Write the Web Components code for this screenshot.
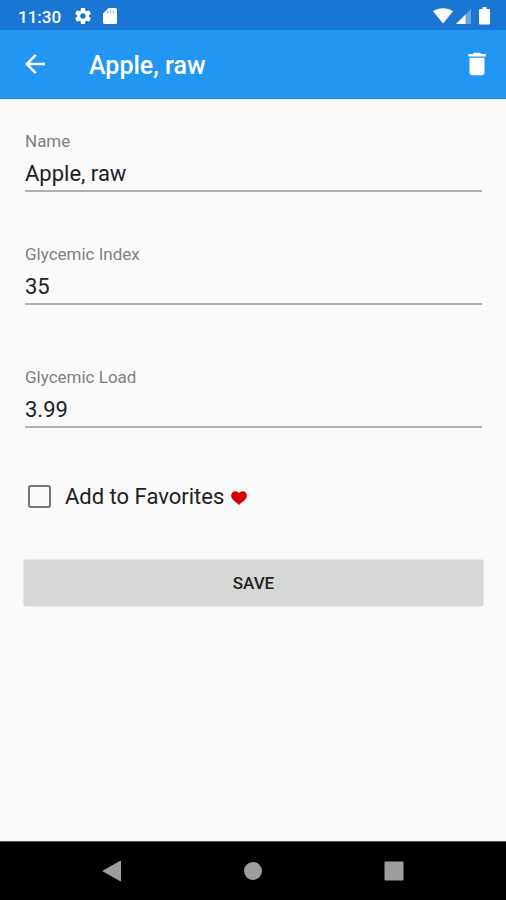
<!DOCTYPE html>
<html lang="en">
<head>
<meta charset="utf-8">
<meta name="viewport" content="width=device-width, initial-scale=1">
<title>Apple, raw</title>
<style>
  html, body { height: 100%; margin: 0; }
  body { font-family: Roboto, "Liberation Sans", sans-serif; background: #fafafa; color: #212121; }
</style>
</head>
<body>
<food-editor></food-editor>
<script>
class BaseElement extends HTMLElement {
  constructor() {
    super();
    this.attachShadow({ mode: "open" });
  }
  connectedCallback() {
    this.shadowRoot.innerHTML = `<style>*{box-sizing:border-box}${this.css()}</style>${this.html()}`;
  }
}

customElements.define("status-bar", class extends BaseElement {
  css() {
    return `
    :host { display: flex; align-items: center; height: 30px; padding: 1px 16px 0 18px; box-sizing: border-box;
      background: #1976d2; color: #fff; font-size: 17px; font-weight: 500; line-height: 24px; }
    svg { display: block; fill: currentColor; }
    .left, .right { display: flex; align-items: center; }
    .left { gap: 12px; }
    .right { margin-left: auto; gap: 3px; }
    time { margin: 2px 2px 0 0; }`;
  }
  html() {
    return `
    <div class="left">
      <time>11:30</time>
      <svg width="16" height="16" viewBox="2 2 20 20"><path d="M19.43 12.98c.04-.32.07-.64.07-.98s-.03-.66-.07-.98l2.11-1.65c.19-.15.24-.42.12-.64l-2-3.46c-.12-.22-.39-.3-.61-.22l-2.49 1c-.52-.4-1.08-.73-1.69-.98l-.38-2.65C14.46 2.18 14.25 2 14 2h-4c-.25 0-.46.18-.49.42l-.38 2.65c-.61.25-1.17.59-1.69.98l-2.49-1c-.23-.09-.49 0-.61.22l-2 3.46c-.13.22-.07.49.12.64l2.11 1.65c-.04.32-.07.65-.07.98s.03.66.07.98l-2.11 1.65c-.19.15-.24.42-.12.64l2 3.46c.12.22.39.3.61.22l2.49-1c.52.4 1.08.73 1.69.98l.38 2.65c.03.24.24.42.49.42h4c.25 0 .46-.18.49-.42l.38-2.65c.61-.25 1.17-.59 1.69-.98l2.49 1c.23.09.49 0 .61-.22l2-3.46c.12-.22.07-.49-.12-.64l-2.11-1.65zM12 15.5c-1.93 0-3.5-1.57-3.5-3.5s1.57-3.5 3.5-3.5 3.5 1.57 3.5 3.5-1.57 3.5-3.5 3.5z"/></svg>
      <svg width="14" height="16" viewBox="0 0 14 16"><path d="M5.500 0H12.500a1.500 1.500 0 0 1 1.500 1.500V14.500a1.500 1.500 0 0 1-1.500 1.500H1.500A1.500 1.500 0 0 1 0 14.500V5.500z"/><path d="M5 2.500v3M7.700 2.500v3M10.400 2.500v3" stroke="#1976d2" stroke-width="1" opacity=".55"/></svg>
    </div>
    <div class="right">
      <svg width="20" height="16" viewBox="0 0 20 16"><path d="M0 3.200C5.500-.7 14.500-.7 20 3.200L10 15.500z"/></svg>
      <svg width="15" height="16" viewBox="0 0 15 16"><path d="M15 1v15H0z" opacity=".35"/><path d="M9.500 6.500V16H0z"/></svg>
      <svg width="16" height="18" viewBox="-5 0 16 18"><path d="M3.500 0h4v2H10a1 1 0 0 1 1 1v13.500a1 1 0 0 1-1 1H1a1 1 0 0 1-1-1V3a1 1 0 0 1 1-1h2.500z"/></svg>
    </div>`;
  }
});

customElements.define("app-bar", class extends BaseElement {
  css() {
    return `
    :host { display: flex; align-items: center; height: 69px; padding: 0 14px 0 20px; box-sizing: border-box;
      background: #2196f3; color: #fff; border-bottom: 1px solid #1e88dd; }
    h1 { flex: 1; margin: 0 0 0 39px; padding-top: 4px; font-size: 25px; font-weight: 500; line-height: 32px; }
    button { border: 0; padding: 0; background: none; color: inherit; display: block; }
    svg { display: block; fill: currentColor; }`;
  }
  html() {
    return `
    <button type="button" aria-label="Back"><svg width="30" height="30" viewBox="0 0 24 24"><path d="M20 11H7.830l5.590-5.590L12 4l-8 8 8 8 1.410-1.410L7.830 13H20v-2z"/></svg></button>
    <h1><slot></slot></h1>
    <button type="button" aria-label="Delete"><svg width="30" height="30" viewBox="0 0 24 24"><path d="M6 19c0 1.100.9 2 2 2h8c1.100 0 2-.9 2-2V7H6v12zM19 4h-3.500l-1-1h-5l-1 1H5v2h14V4z"/></svg></button>`;
  }
});

customElements.define("text-field", class extends BaseElement {
  css() {
    return `
    :host { display: block; padding: 0 1px; }
    label { display: block; color: #808080; font-size: 17px; line-height: 20px; }
    input { display: block; width: 100%; height: 41px; border: 0; border-bottom: 2px solid #b0b0b0; border-radius: 0;
      padding: 5px 0 0; margin: 0; outline: 0; background: none; color: #212121; font: 400 22px Roboto, "Liberation Sans", sans-serif; }`;
  }
  html() {
    return `<label for="f">${this.getAttribute("label")}</label>
    <input id="f" type="text" value="${this.getAttribute("value")}">`;
  }
});

customElements.define("check-option", class extends BaseElement {
  css() {
    return `
    :host { display: block; color: #212121; }
    label { display: flex; align-items: center; padding-left: 4px; font-size: 22px; line-height: 30px; }
    span { padding-top: 2px; }
    input { appearance: none; width: 23px; height: 23px; margin: 0 14px 0 0; border: 2px solid #757575; border-radius: 3px; }
    input:checked { background: #2196f3; }
    svg { display: block; margin: 4px 0 0 7px; fill: #d50000; }`;
  }
  html() {
    return `<label><input type="checkbox"><span><slot></slot></span>
    <svg width="16" height="14" viewBox="0 0 16 14" aria-hidden="true"><path d="M8 14C6.500 12 1.800 9.500.5 6.500-.7 3.400 1.300.2 4.300.2 6 .2 7.300 1 8 2.300 8.700 1 10 .2 11.700.2c3 0 5 3.200 3.800 6.300C14.200 9.500 9.500 12 8 14z"/></svg></label>`;
  }
});

customElements.define("raised-button", class extends BaseElement {
  css() {
    return `
    :host { display: block; }
    button { display: block; width: 100%; height: 46px; border: 0; border-radius: 2px; padding: 0;
      background: #d6d7d7; color: #212121; box-shadow: 0 0 2px rgba(0,0,0,.25);
      font: 500 17px Roboto, "Liberation Sans", sans-serif; }`;
  }
  html() { return `<button type="submit"><slot></slot></button>`; }
});

customElements.define("nav-bar", class extends BaseElement {
  css() {
    return `
    :host { display: flex; align-items: center; height: 59px; padding: 0 42px; box-sizing: border-box;
      background: #000; color: #9e9e9e; border-top: 1px solid #555; }
    button { flex: 1; display: flex; justify-content: center; border: 0; padding: 0; background: none; color: inherit; }
    svg { display: block; fill: currentColor; }`;
  }
  html() {
    return `
    <button type="button" aria-label="Back"><svg width="20" height="22" viewBox="0 0 20 22"><path d="M18.200.8Q19 .4 19 1.300V20.700Q19 21.600 18.200 21.200L1 11.600Q0 11 1 10.400z"/></svg></button>
    <button type="button" aria-label="Home"><svg width="18" height="18" viewBox="0 0 18 18"><circle cx="9" cy="9" r="9"/></svg></button>
    <button type="button" aria-label="Recent apps"><svg width="20" height="20" viewBox="0 0 20 20"><rect x=".5" y=".5" width="19" height="19" rx="1"/></svg></button>`;
  }
});

customElements.define("food-editor", class extends BaseElement {
  css() {
    return `
    :host { display: flex; flex-direction: column; min-height: 100%; }
    main { flex: 1; padding: 32px 23px 0 24px; }
    text-field { margin-bottom: 52px; }
    text-field.wide { margin-bottom: 62px; }
    check-option { margin-bottom: 48px; }`;
  }
  html() {
    return `
    <status-bar></status-bar>
    <app-bar>Apple, raw</app-bar>
    <main>
      <text-field label="Name" value="Apple, raw"></text-field>
      <text-field class="wide" label="Glycemic Index" value="35"></text-field>
      <text-field label="Glycemic Load" value="3.99"></text-field>
      <check-option>Add to Favorites</check-option>
      <raised-button>SAVE</raised-button>
    </main>
    <nav-bar></nav-bar>`;
  }
});
</script>
</body>
</html>
